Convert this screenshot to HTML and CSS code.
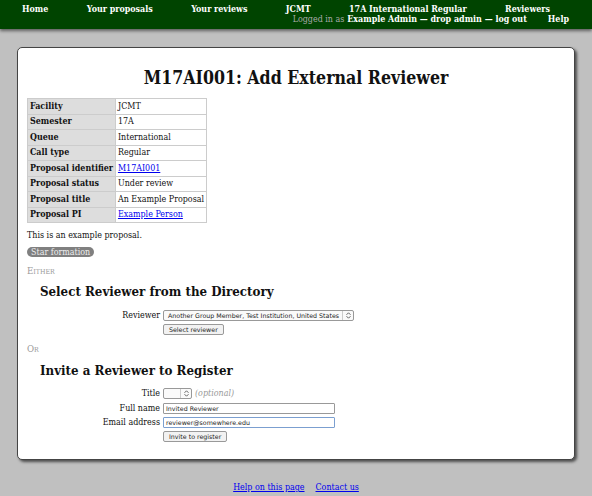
FILE: index.html
```html
<!DOCTYPE html>
<html>
<head>
<meta charset="utf-8">
<title>Add External Reviewer</title>
<link rel="stylesheet" href="styles.css">
</head>
<body>
<div class="topbar">
  <nav class="nav-main">
    <a href="#">Home</a>
    <a href="#">Your proposals</a>
    <a href="#">Your reviews</a>
    <a href="#">JCMT</a>
    <a href="#">17A International Regular</a>
    <a href="#">Reviewers</a>
  </nav>
  <div class="nav-user">
    <span class="logged">Logged in as</span>
    <span class="user">Example Admin — drop admin — log out</span>
    <a href="#" class="help">Help</a>
  </div>
</div>
<div class="main">
  <h1>M17AI001: Add External Reviewer</h1>
  <table class="info">
    <tr><th>Facility</th><td>JCMT</td></tr>
    <tr><th>Semester</th><td>17A</td></tr>
    <tr><th>Queue</th><td>International</td></tr>
    <tr><th>Call type</th><td>Regular</td></tr>
    <tr><th>Proposal identifier</th><td><a href="#">M17AI001</a></td></tr>
    <tr><th>Proposal status</th><td>Under review</td></tr>
    <tr><th>Proposal title</th><td>An Example Proposal</td></tr>
    <tr><th>Proposal PI</th><td><a href="#">Example Person</a></td></tr>
  </table>
  <p class="abstract">This is an example proposal.</p>
  <div class="cats"><span class="pill">Star formation</span></div>
  <p class="sep">Either</p>
  <h2>Select Reviewer from the Directory</h2>
  <div class="form">
    <label class="lab">Reviewer</label>
    <div class="ctl"><span class="select wide"><span>Another Group Member, Test Institution, United States</span><span class="arr"><svg width="5" height="7" viewBox="0 0 5 7"><path d="M0.5 2.8 L2.5 0.8 L4.5 2.8 M0.5 4.2 L2.5 6.2 L4.5 4.2" fill="none" stroke="#555" stroke-width="0.9"/></svg></span></span></div>
    <span></span>
    <div class="ctl"><span class="btn">Select reviewer</span></div>
  </div>
  <p class="sep sep2">Or</p>
  <h2>Invite a Reviewer to Register</h2>
  <div class="form">
    <label class="lab first">Title</label>
    <div class="ctl first"><span class="select small"><span class="arr"><svg width="5" height="7" viewBox="0 0 5 7"><path d="M0.5 2.8 L2.5 0.8 L4.5 2.8 M0.5 4.2 L2.5 6.2 L4.5 4.2" fill="none" stroke="#555" stroke-width="0.9"/></svg></span></span> <span class="opt">(optional)</span></div>
    <label class="lab">Full name</label>
    <div class="ctl"><span class="input">Invited Reviewer</span></div>
    <label class="lab">Email address</label>
    <div class="ctl"><span class="input focus">reviewer@somewhere.edu</span></div>
    <span></span>
    <div class="ctl"><span class="btn">Invite to register</span></div>
  </div>
</div>
<div class="footer">
  <a href="#">Help on this page</a>
  <a href="#">Contact us</a>
</div>
</body>
</html>
```
FILE: styles.css
```css
html, body { margin: 0; padding: 0; }
body {
  background: #c0c0c0;
  font-family: "DejaVu Serif", serif;
  font-stretch: condensed;
  font-size: 8.85px;
  color: #111;
  width: 592px;
  height: 496px;
  overflow: hidden;
}
.topbar {
  background: #004400;
  height: 29px;
  box-shadow: 0 2px 3px rgba(0,0,0,0.5);
  color: #fff;
  font-weight: bold;
  padding: 0 23px 0 22px;
}
.nav-main {
  display: flex;
  justify-content: space-between;
  padding-top: 4px;
  padding-right: 19px;
  line-height: 10px;
}
.nav-main a, .nav-user a { color: #fff; text-decoration: none; }
.nav-user {
  display: flex;
  justify-content: flex-end;
  gap: 3px;
  line-height: 10px;
}
.nav-user .logged { color: #aaa; font-weight: normal; }
.nav-user .help { margin-left: 18px; }
.main {
  background: #fff;
  margin: 18px 17px 0;
  border: 1px solid #444;
  border-radius: 5px;
  box-shadow: 2px 2px 3px rgba(0,0,0,0.6);
  padding: 0 9px;
  box-sizing: border-box;
  height: 413px;
}
h1 {
  text-align: center;
  font-size: 17.6px;
  margin: 0;
  padding-top: 19px;
  height: 50px;
  box-sizing: border-box;
  line-height: 22px;
}
table.info {
  border-collapse: collapse;
  border: 1px solid #ccc;
}
.info th, .info td {
  border: 1px solid #ccc;
  padding: 1.75px 2px;
  height: 11px;
  line-height: 11px;
  text-align: left;
}
.info th { background: #ddd; }
a { color: #00e; }
.abstract { margin: 6.5px 0 6.5px; line-height: 11px; }
.pill {
  display: inline-block;
  background: #808080;
  color: #eee;
  border-radius: 5px;
  padding: 0 4px;
  line-height: 10px;
}
.sep {
  font-variant: small-caps;
  font-size: 9.6px;
  color: #999;
  margin: 7.5px 0 9.5px;
  line-height: 11px;
}
.sep2 { margin-top: 8.5px; }
h2 {
  font-size: 13.2px;
  margin: 0 0 10.5px 13px;
  line-height: 14px;
}
.form {
  display: grid;
  grid-template-columns: 133px auto;
  column-gap: 3px;
  row-gap: 3px;
  align-items: center;
  line-height: 11px;
}
.form .first { margin-bottom: 1px; }
.lab { text-align: right; }
.ctl { display: flex; align-items: center; gap: 3px; }
.select, .btn, .input {
  font-family: "DejaVu Sans", sans-serif;
  font-stretch: normal;
  font-size: 6.3px;
  border: 1px solid #999;
  border-radius: 2px;
  height: 11px;
  box-sizing: border-box;
  display: inline-flex;
  align-items: center;
  background: #fafafa;
  padding: 0 4px;
  color: #222;
}
.select.wide { width: 191px; justify-content: space-between; padding-right: 0; }
.select.small { width: 29px; justify-content: flex-end; padding-right: 0; }
.arr {
  width: 10px;
  height: 9px;
  border-left: 1px solid #ccc;
  display: flex;
  align-items: center;
  justify-content: center;
}
.arr svg { display: block; }
.btn { background: #f2f2f2; padding: 0 5px; }
.input { width: 172px; background: #fff; border-radius: 1px; padding: 0 2px; }
.input.focus { border-color: #7b9fd0; }
.opt { font-style: italic; color: #999; }
.footer {
  display: flex;
  justify-content: center;
  gap: 11px;
  margin-top: 22px;
  line-height: 11px;
}
```
